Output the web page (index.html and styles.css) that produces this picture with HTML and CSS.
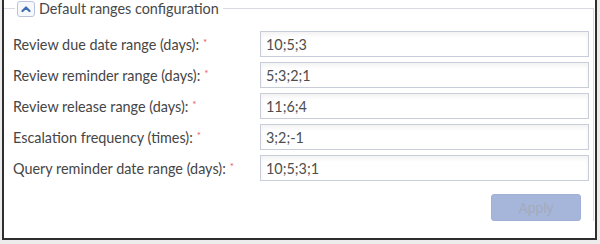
FILE: index.html
```html
<html>
  <head>
    <meta charset="utf-8">
    <title>Default ranges configuration</title>
    <link rel="stylesheet" href="styles.css">
  </head>
  <body>
    <div class="panel">
      <fieldset class="ranges">
        <legend>
          <span class="toggle">
            <svg width="10" height="8" viewBox="0 0 10 8"><path d="M1.5 6 L5 2.5 L8.5 6" fill="none" stroke="#3d6db3" stroke-width="2.2" stroke-linecap="round" stroke-linejoin="round"/></svg>
          </span>
          Default ranges configuration
        </legend>
        <div class="rows">
          <label>Review due date range (days):<span class="req">*</span></label>
          <input type="text" value="10;5;3">
          <label>Review reminder range (days):<span class="req">*</span></label>
          <input type="text" value="5;3;2;1">
          <label>Review release range (days):<span class="req">*</span></label>
          <input type="text" value="11;6;4">
          <label>Escalation frequency (times):<span class="req">*</span></label>
          <input type="text" value="3;2;-1">
          <label>Query reminder date range (days):<span class="req">*</span></label>
          <input type="text" value="10;5;3;1">
        </div>
        <div class="actions">
          <button type="button" disabled>Apply</button>
        </div>
      </fieldset>
    </div>
  </body>
</html>
```

FILE: styles.css
```css
body {
  margin: 0;
  background: #ececec;
  font-family: Lato, "Open Sans", sans-serif;
}

.panel {
  margin-left: 2px;
  width: 591px;
  height: 238px;
  background: #fff;
  border: 2px solid #2e2e2e;
  border-top: none;
}

.ranges {
  margin: 0 2px 0 0;
  padding: 0 4px 0 9px;
  border: 1px solid #d8d9e2;
  border-left: none;
  border-bottom: none;
}

.ranges legend {
  margin-left: 2px;
  padding: 0 4px 0 2px;
  font-size: 14.4px;
  color: #484848;
  display: flex;
  align-items: center;
  gap: 4px;
  height: 17px;
  line-height: 17px;
}

.toggle {
  display: flex;
  align-items: center;
  justify-content: center;
  width: 16px;
  height: 14px;
  border: 1px solid #b9c4dc;
  border-radius: 3px;
  background: #f6f8fc;
}

.rows {
  display: grid;
  grid-template-columns: 247px 329px;
  row-gap: 5px;
  margin-top: 14px;
  align-items: center;
}

.rows label {
  font-size: 14.4px;
  color: #464646;
}

.req {
  color: #e05a5a;
  font-size: 10px;
  vertical-align: 4px;
  margin-left: 4px;
}

.rows input {
  height: 26px;
  box-sizing: border-box;
  border: 1px solid #c9ccd9;
  padding: 0 5px;
  font-family: Lato, sans-serif;
  font-size: 14.4px;
  color: #4e4e4e;
  background: #fff;
  box-shadow: inset 0 3px 4px rgba(0, 0, 0, 0.05);
  outline: none;
}

.actions {
  display: flex;
  justify-content: flex-end;
  margin-top: 13px;
  padding-right: 8px;
}

.actions button {
  width: 90px;
  height: 27px;
  border: 1px solid #a0b0d6;
  border-radius: 3px;
  background: #a6b5da;
  color: #a3abbb;
  font-family: "Liberation Sans", Arial, sans-serif;
  font-size: 14px;
}
```
